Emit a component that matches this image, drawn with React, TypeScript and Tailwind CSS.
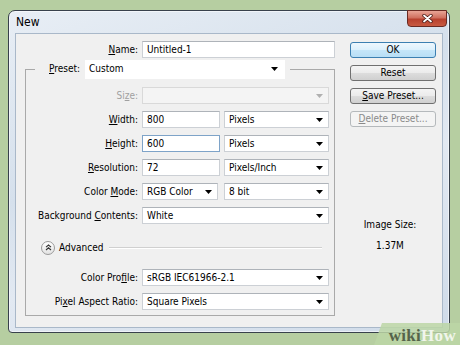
import React from "react";

const FONT = "font-['DejaVu_Sans_Condensed','DejaVu_Sans','Liberation_Sans',sans-serif]";

function Mn({ text, m }: { text: string; m?: number }) {
  if (m === undefined) return <>{text}</>;
  return (
    <>
      {text.slice(0, m)}
      <span className="underline underline-offset-[1px]">{text[m]}</span>
      {text.slice(m + 1)}
    </>
  );
}

function Arrow({ disabled }: { disabled?: boolean }) {
  return (
    <svg width="7" height="4" viewBox="0 0 7 4" className="shrink-0">
      <path d="M0 0H7L3.5 4Z" fill={disabled ? "#b0b0b0" : "#000"} />
    </svg>
  );
}

function Input({ value, focus }: { value: string; focus?: boolean }) {
  return (
    <div
      className={
        "h-[17px] bg-white border flex items-center pl-[4px] " +
        (focus ? "border-[#7ea3c8]" : "border-[#ccd0d5] border-t-[#aeb3b9]")
      }
    >
      {value}
    </div>
  );
}

function Select({ value, disabled }: { value?: string; disabled?: boolean }) {
  return (
    <div
      className={
        "h-[17px] border flex items-center justify-between pl-[4px] pr-[5px] " +
        (disabled ? "bg-[#f4f4f4] border-[#d9d9d9]" : "bg-white border-[#ccd0d5] border-t-[#aeb3b9]")
      }
    >
      <span>{value}</span>
      <Arrow disabled={disabled} />
    </div>
  );
}

function Row({ label, m, dim, children }: { label: string; m?: number; dim?: boolean; children: React.ReactNode }) {
  return (
    <div className="grid grid-cols-[112px_1fr] gap-x-[4px] items-center h-[17px]">
      <span className={"text-right whitespace-nowrap " + (dim ? "text-[#a0a0a0]" : "")}>
        <Mn text={label} m={m} />
      </span>
      {children}
    </div>
  );
}

function Btn({ label, m, primary, disabled }: { label: string; m?: number; primary?: boolean; disabled?: boolean }) {
  const look = primary
    ? "border-[#3c7fb1] bg-[linear-gradient(#eef7fd,#dcf0fc_50%,#c6e6f9_50%,#b8def5)]"
    : disabled
    ? "border-[#b5b9bc] bg-[#f4f4f4] text-[#8a8a8a]"
    : "border-[#707070] bg-[linear-gradient(#f4f4f4,#ebebeb_50%,#dddddd_50%,#d0d0d0)]";
  return (
    <div className={"h-[16px] rounded-[3px] border flex items-center justify-center " + look}>
      <Mn text={label} m={m} />
    </div>
  );
}

export default function App() {
  return (
    <div className={"relative w-[460px] h-[345px] overflow-hidden bg-[#b6cea1] pl-[8px] pt-[10px] text-[10px] leading-[12px] text-black " + FONT}>
      {/* window */}
      <div className="w-[442px] h-[323px] rounded-t-[7px] rounded-b-[4px] border border-[#38414c] bg-[linear-gradient(160deg,#e8eef5,#d5e0ec_40%,#e2e9f2_60%,#cfdbe9)] shadow-[inset_0_0_0_1px_rgba(255,255,255,0.55)] flex flex-col px-[6px] pb-[4px]">
        {/* title bar */}
        <div className="h-[22px] flex items-start justify-between -mx-[6px] pl-[7px] pr-[2px]">
          <span className="text-[12px] leading-[22px] text-black">New</span>
          <div className="w-[40px] h-[17px] -mt-[1px] rounded-b-[4px] border border-[#6a2a22] bg-[linear-gradient(#e9a596,#d0705f_45%,#b8412e_55%,#c85a41)] flex items-center justify-center">
            <svg width="11" height="9" viewBox="0 0 11 9">
              <path d="M2 1.5L9 7.5M9 1.5L2 7.5" stroke="#4a1a14" strokeWidth="3.4" strokeLinecap="round" />
              <path d="M2 1.5L9 7.5M9 1.5L2 7.5" stroke="#fff" strokeWidth="1.8" strokeLinecap="round" />
            </svg>
          </div>
        </div>

        {/* client area */}
        <div className="flex-1 bg-[#f0f0f0] border border-[#a9b8c9] flex">
          {/* left column */}
          <div className="w-[319px] pt-[7px] flex flex-col">
            <div className="grid grid-cols-[122px_1fr] gap-x-[4px] items-center h-[17px]">
              <span className="text-right">
                <Mn text="Name:" m={0} />
              </span>
              <Input value="Untitled-1" />
            </div>

            <fieldset className="ml-[9px] mt-[1px] border border-[#a9a9a9] pb-[5px] pr-[5px]">
              <legend className="ml-[9px]">
                <div className="flex items-center pl-[14px] pr-[5px] h-[20px]">
                  <span className="w-[36px]">
                    <Mn text="Preset:" m={0} />
                  </span>
                  <div className="w-[200px] h-[19px] bg-white flex items-center justify-between pl-[4px] pr-[7px]">
                    <span>Custom</span>
                    <Arrow />
                  </div>
                </div>
              </legend>

              <div className="pt-[8px] flex flex-col gap-[7px]">
                <Row label="Size:" m={2} dim>
                  <Select disabled />
                </Row>
                <Row label="Width:" m={0}>
                  <div className="grid grid-cols-[78px_1fr] gap-[4px]">
                    <Input value="800" />
                    <Select value="Pixels" />
                  </div>
                </Row>
                <Row label="Height:" m={0}>
                  <div className="grid grid-cols-[78px_1fr] gap-[4px]">
                    <Input value="600" focus />
                    <Select value="Pixels" />
                  </div>
                </Row>
                <Row label="Resolution:" m={0}>
                  <div className="grid grid-cols-[78px_1fr] gap-[4px]">
                    <Input value="72" />
                    <Select value="Pixels/Inch" />
                  </div>
                </Row>
                <Row label="Color Mode:" m={6}>
                  <div className="grid grid-cols-[76px_1fr] gap-[6px]">
                    <Select value="RGB Color" />
                    <Select value="8 bit" />
                  </div>
                </Row>
                <Row label="Background Contents:" m={11}>
                  <Select value="White" />
                </Row>
              </div>

              {/* advanced */}
              <div className="mt-[15px] h-[17px] flex items-center pl-[15px] pr-[7px]">
                <div className="w-[14px] h-[14px] rounded-full border border-[#9a9a9a] bg-[linear-gradient(#ffffff,#e2e2e2)] flex items-center justify-center">
                  <svg width="7" height="7" viewBox="0 0 7 7">
                    <path d="M1 3.2L3.5 1L6 3.2M1 6L3.5 3.8L6 6" fill="none" stroke="#333" strokeWidth="1.1" />
                  </svg>
                </div>
                <span className="ml-[4px]">Advanced</span>
                <div className="ml-[6px] flex-1 h-[2px] border-t border-[#d0d0d0] border-b-white border-b" />
              </div>

              <div className="mt-[13px] flex flex-col gap-[7px]">
                <Row label="Color Profile:" m={9}>
                  <Select value="sRGB IEC61966-2.1" />
                </Row>
                <Row label="Pixel Aspect Ratio:" m={2}>
                  <Select value="Square Pixels" />
                </Row>
              </div>
            </fieldset>
          </div>

          {/* right column */}
          <div className="ml-[15px] w-[86px] pt-[8px] flex flex-col">
            <div className="flex flex-col gap-[7px]">
              <Btn label="OK" primary />
              <Btn label="Reset" />
              <Btn label="Save Preset..." m={0} />
              <Btn label="Delete Preset..." m={0} disabled />
            </div>
            <div className="mt-[92px] pr-[6px] text-center">Image Size:</div>
            <div className="mt-[9px] pr-[6px] text-center">1.37M</div>
          </div>
        </div>
      </div>

      {/* wikiHow watermark */}
      <div className="absolute right-0 bottom-0 w-[86px] h-[22px] bg-[rgba(188,214,166,0.85)] [clip-path:polygon(8px_0,100%_0,100%_100%,0_100%)] flex items-end justify-end pr-[4px]">
        <span className="font-['Liberation_Serif',serif] font-bold text-[17px] leading-[19px] tracking-[0.3px]">
          <span className="text-[#55634b]">wiki</span>
          <span className="text-[#f1f5ec]">How</span>
        </span>
      </div>
    </div>
  );
}
